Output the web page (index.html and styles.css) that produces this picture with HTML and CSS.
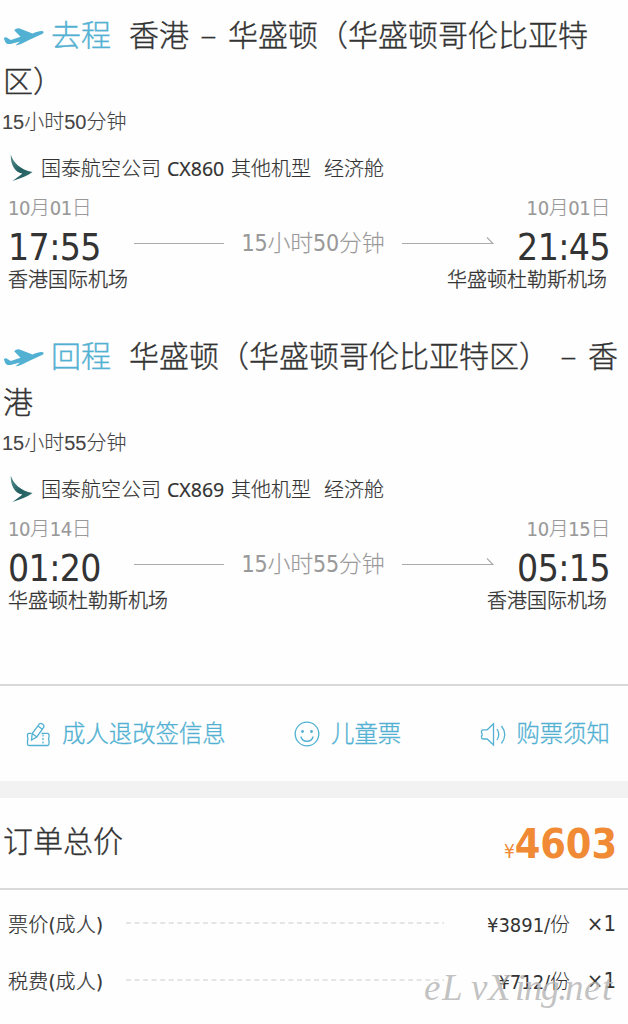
FILE: index.html
```html
<!DOCTYPE html>
<html lang="zh-CN">
<head>
<meta charset="utf-8">
<title>订单详情</title>
<link rel="stylesheet" href="styles.css">
</head>
<body>
<svg width="0" height="0" class="defs">
  <defs>
    <linearGradient id="wing" x1="0" y1="0" x2="1" y2="1"><stop offset="0" stop-color="#5b9290"/><stop offset=".5" stop-color="#235f62"/><stop offset="1" stop-color="#35716f"/></linearGradient>
    <symbol id="plane" viewBox="0 0 42 20"><path d="M.8 11.2Q2.8 9.4 4.8 11.2L7.8 13 17.5 9.8 11.2 3.2Q12.5 1.2 16 1.3L29.5 6.6C33 4.8 36.8 3.7 39 3.9 41.6 4.2 40.8 6.2 38.5 7.3L26 13 18.5 16.8Q14.5 18.4 12.8 18.1L17 14.6 7.5 16.9C4.5 17.4 3 16.4 2.2 14.7Z" fill="#52b1d2"/></symbol>
    <symbol id="airline" viewBox="0 0 24 28"><path d="M1.8.5C4.5 9 11 15.5 23.5 18 18.5 22 11.5 24.4 3.4 27 7.2 24.4 11 21.8 13.3 19.6 5.5 18.3 1.2 10 1.8.5Z" fill="url(#wing)"/></symbol>
  </defs>
</svg>
<main class="page">
  <section class="trip">
    <h2 class="trip-title"><svg class="plane"><use href="#plane"/></svg><span class="direction">去程</span>香港<span class="dash">–</span>华盛顿（华盛顿哥伦比亚特区）</h2>
    <p class="duration">15小时50分钟</p>
    <div class="flight"><svg class="airline"><use href="#airline"/></svg><span>国泰航空公司</span><span class="code">CX860</span><span>其他机型</span><span class="cabin">经济舱</span></div>
    <div class="dates"><span>10月01日</span><span>10月01日</span></div>
    <div class="times"><span class="time">17:55</span><i class="line"></i><span class="length">15小时50分钟</span><svg class="arrow" viewBox="0 0 92 12"><path d="M0 8.5H91L85 2.5"/></svg><span class="time end">21:45</span></div>
    <div class="airports"><span>香港国际机场</span><span>华盛顿杜勒斯机场</span></div>
  </section>
  <section class="trip">
    <h2 class="trip-title"><svg class="plane"><use href="#plane"/></svg><span class="direction">回程</span>华盛顿（华盛顿哥伦比亚特区）<span class="dash">–</span>香港</h2>
    <p class="duration">15小时55分钟</p>
    <div class="flight"><svg class="airline"><use href="#airline"/></svg><span>国泰航空公司</span><span class="code">CX869</span><span>其他机型</span><span class="cabin">经济舱</span></div>
    <div class="dates"><span>10月14日</span><span>10月15日</span></div>
    <div class="times"><span class="time">01:20</span><i class="line"></i><span class="length">15小时55分钟</span><svg class="arrow" viewBox="0 0 92 12"><path d="M0 8.5H91L85 2.5"/></svg><span class="time end">05:15</span></div>
    <div class="airports"><span>华盛顿杜勒斯机场</span><span>香港国际机场</span></div>
  </section>
  <nav class="links">
    <a class="link"><svg class="link-icon" viewBox="0 0 25 25"><path d="M5.5 11.3H3Q1.5 11.3 1.5 12.8V15.3Q2.6 17 1.5 18.5V22Q1.5 23.5 3 23.5H21.5Q23 23.5 23 22V18.5Q21.9 17 23 15.3V12.8Q23 11.3 21.5 11.3H15.5"/><path d="M5.5 18 6.2 11.5 13.2 2.2Q14.5.8 16 1.8L17.3 2.8Q18.6 4 17.6 5.4L10.8 15ZM12 4 16 7M6.2 11.5 10.8 15"/><path d="M17 12.5V23" stroke-dasharray="2 1.5"/></svg>成人退改签信息</a>
    <a class="link child"><svg class="link-icon smile" viewBox="0 0 26 26"><circle cx="13" cy="13" r="11.8"/><path d="M6.8 15.5C8.5 21.8 17.5 21.8 19.2 15.5"/><circle class="eye" cx="8.5" cy="10.5" r="1.4"/><circle class="eye" cx="17.5" cy="10.5" r="1.4"/></svg>儿童票</a>
    <a class="link"><svg class="link-icon sound" viewBox="0 0 27 25"><path d="M13.5 1.8V23L7.2 17H3.5Q1.5 17 1.5 15V14Q3 12.3 1.5 11V9.5Q1.5 7.8 3.5 7.8H7.2ZM17 7Q20.5 12.5 17 18M21.5 4Q28 12.5 21.5 21.5"/></svg>购票须知</a>
  </nav>
  <div class="band"></div>
  <div class="total"><span class="total-label">订单总价</span><span class="total-price"><span class="yen">¥</span>4603</span></div>
  <section class="fees">
    <div class="fee"><span class="fee-name">票价(成人)</span><svg class="leader"><path d="M0 1H318"/></svg><span class="amount">¥3891/份</span><span class="count">×1</span></div>
    <div class="fee"><span class="fee-name">税费(成人)</span><svg class="leader"><path d="M0 1H318"/></svg><span class="amount">¥712/份</span><span class="count">×1</span></div>
  </section>
  <svg class="watermark" viewBox="0 0 200 50"><text x="2 20 49 66 93 102 119 136 143 162 180" y="29">eLvXing.net</text></svg>
</main>
</body>
</html>
```
FILE: styles.css
```css
* { box-sizing: border-box; }
body { margin: 0; background: #fefefe; color: #333; font-family: "DejaVu Sans Condensed", "Noto Sans CJK SC", sans-serif; font-weight: 300; }
.defs { display: block; height: 0; }
.page { position: relative; width: 628px; height: 1024px; overflow: hidden; }
.trip { height: 321px; padding-top: 10px; }
.trip-title { margin: 0 0 0 3px; font: 300 30px/46px "Noto Sans CJK SC", sans-serif; height: 94px; -webkit-text-stroke: .35px; }
.plane { width: 42px; height: 20px; margin-right: 6px; vertical-align: -1px; }
.direction { color: #52b1d2; margin-right: 18px; }
.dash { display: inline-block; width: 39px; text-align: center; }
.duration { margin: 0 0 0 2px; font: 300 20px/36px "Liberation Sans", "Noto Sans CJK SC", sans-serif; color: #444; -webkit-text-stroke: .1px; }
.flight { display: flex; align-items: center; height: 57px; padding-left: 9px; font-size: 20px; line-height: 30px; -webkit-text-stroke: .15px; }
.airline { width: 24px; height: 28px; margin-right: 8px; margin-top: -2px; }
.code { width: 70px; padding-left: 6px; font-family: "Noto Sans", sans-serif; font-size: 19.5px; font-weight: 400; }
.cabin { margin-left: 13px; }
.dates { display: flex; justify-content: space-between; height: 20px; padding: 0 18px 0 8px; font-size: 20px; line-height: 22px; letter-spacing: -.4px; color: #999; -webkit-text-stroke: .1px; }
.times { display: flex; align-items: center; height: 52px; padding: 0 18px 0 8px; }
.time { width: 126px; font-size: 37px; line-height: 52px; letter-spacing: -.6px; font-weight: 400; padding-top: 9px; }
.end { width: auto; margin-left: auto; }
.line { width: 90px; height: 1px; background: #aaa; }
.length { width: 178px; text-align: center; font-size: 23px; line-height: 52px; letter-spacing: -.2px; color: #999; -webkit-text-stroke: .1px; }
.arrow { width: 92px; height: 12px; margin-top: -5px; fill: none; stroke: #aaa; stroke-width: 1.2; }
.airports { display: flex; justify-content: space-between; padding: 0 21px 0 8px; font-size: 20px; line-height: 22px; -webkit-text-stroke: .3px; }
.links { display: flex; height: 97px; margin-top: 42px; border-top: 2px solid #dadada; padding: 1px 18px 0 26px; justify-content: space-between; align-items: center; }
.link { display: flex; align-items: center; font-size: 23.4px; color: #52b1d2; line-height: 40px; -webkit-text-stroke: .3px; }
.child { margin-right: 11px; }
.link-icon { width: 25px; height: 25px; margin-right: 11px; fill: none; stroke: #52b1d2; stroke-width: 1.3; }
.smile { width: 26px; height: 26px; margin-right: 11px; }
.sound { width: 27px; margin-right: 9px; }
.eye { fill: #52b1d2; stroke: none; }
.band { height: 17px; background: #f2f2f2; }
.total { display: flex; justify-content: space-between; height: 92px; padding: 0 11px 0 3px; border-bottom: 2px solid #dadada; }
.total-label { font-size: 30px; line-height: 88px; -webkit-text-stroke: .35px; }
.total-price { color: #f08a35; font-size: 41px; line-height: 92px; font-weight: 700; letter-spacing: -.1px; }
.yen { font-size: 19px; font-weight: 400; }
.fees { padding: 5px 12px 0 8px; }
.fee { display: flex; align-items: center; height: 57px; font-size: 20px; }
.fee-name { width: 118px; letter-spacing: .2px; -webkit-text-stroke: .2px; }
.leader { width: 318px; height: 2px; margin-top: -2px; stroke: #ddd; stroke-width: 1.4; stroke-dasharray: 5 3.55; }
.amount { margin-left: auto; letter-spacing: -.05px; }
.count { width: 46px; text-align: right; font-size: 22px; }
.watermark { position: absolute; left: 422px; top: 971px; width: 200px; height: 50px; overflow: visible; }
.watermark text { font: italic 400 37px "Liberation Serif", serif; fill: #b8b8b8; fill-opacity: .85; }
```
